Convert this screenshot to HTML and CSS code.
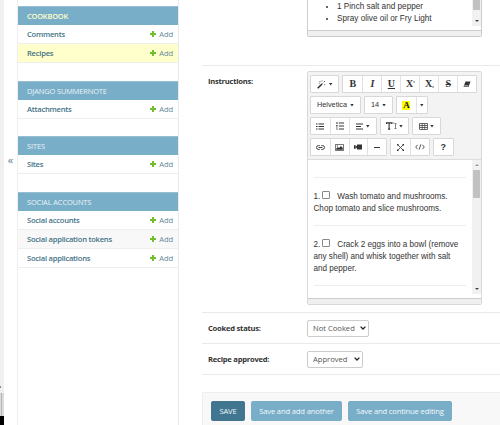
FILE: index.html
```html
<!DOCTYPE html>
<html lang="en">
<head>
<meta charset="utf-8">
<title>Change recipe</title>
<link rel="stylesheet" href="styles.css">
</head>
<body>
<div class="edge"><div class="edge-mark"></div><div class="edge-bar"></div><div class="edge-end"></div></div>
<div class="toggle">«</div>
<nav class="sidebar">
  <section class="app current">
    <h2>COOKBOOK</h2>
    <div class="model"><b>Comments</b><a><i class="plus"></i>Add</a></div>
    <div class="model selected"><b>Recipes</b><a><i class="plus"></i>Add</a></div>
  </section>
  <section class="app">
    <h2>DJANGO SUMMERNOTE</h2>
    <div class="model"><b>Attachments</b><a><i class="plus"></i>Add</a></div>
  </section>
  <section class="app">
    <h2>SITES</h2>
    <div class="model"><b>Sites</b><a><i class="plus"></i>Add</a></div>
  </section>
  <section class="app">
    <h2>SOCIAL ACCOUNTS</h2>
    <div class="model"><b>Social accounts</b><a><i class="plus"></i>Add</a></div>
    <div class="model alt"><b>Social application tokens</b><a><i class="plus"></i>Add</a></div>
    <div class="model"><b>Social applications</b><a><i class="plus"></i>Add</a></div>
  </section>
</nav>
<main>
  <div class="row ingredients">
    <div class="label"></div>
    <div class="editor first">
      <div class="pane">
        <ul class="list"><li>1 Pinch salt and pepper</li><li>Spray olive oil or Fry Light</li></ul>
        <div class="scroll"><div class="thumb"></div><div class="down"></div></div>
      </div>
      <div class="status"></div>
    </div>
  </div>
  <div class="row instructions">
    <div class="label">Instructions:</div>
    <div class="editor second">
      <div class="toolbar">
        <div class="tools">
          <div class="group"><span class="btn w28"><svg width="9" height="9" viewBox="0 0 9 9"><path d="M.7 8.3 5 4" stroke="#333" stroke-width="1.6"/><path d="M5.4 3.6 6.3 2.7M3 1v1M5 .5v1M7.5 1v1M7.7 4.2v1M2.5 2.8v.8" stroke="#555" stroke-width=".9"/></svg><i class="caret"></i></span></div>
          <div class="group seven"><span class="btn serif">B</span><span class="btn serif ital">I</span><span class="btn serif under">U</span><span class="btn serif">X<sup>s</sup></span><span class="btn serif">X<sub>s</sub></span><span class="btn serif strike">S</span><span class="btn"><svg width="8" height="7" viewBox="0 0 8 7"><path d="M2.5.5h5L5.5 6h-5z" fill="#333"/><path d="m1.5 4.2h4L5 5.6H1z" fill="#bbb"/></svg></span></div>
        </div>
        <div class="tools">
          <div class="group"><span class="btn w51">Helvetica<i class="caret"></i></span></div>
          <div class="group"><span class="btn w29">14<i class="caret"></i></span></div>
          <div class="group"><span class="btn"><span class="mark">A</span></span><span class="btn w11"><i class="caret"></i></span></div>
        </div>
        <div class="tools">
          <div class="group"><span class="btn"><svg width="8" height="7" viewBox="0 0 8 7"><path d="M0 1h1.5M0 3.5h1.5M0 6h1.5M2.5 1H8M2.5 3.5H8M2.5 6H8" stroke="#333" stroke-width="1.2"/></svg></span><span class="btn"><svg width="8" height="8" viewBox="0 0 8 8"><path d="M1 0v2M.2 3.5h1.3M.2 5h1.3M.2 7h1.3M2.8 1H8M2.8 4H8M2.8 7H8" stroke="#333"/></svg></span><span class="btn w28"><svg width="7" height="7" viewBox="0 0 7 7"><path d="M0 1h7M0 3.5h5M0 6h7" stroke="#333" stroke-width="1.1"/></svg><i class="caret"></i></span></div>
          <div class="group"><span class="btn w29"><svg width="11" height="8" viewBox="0 0 11 8"><path d="M.4 2V.9h5.4V2M3.1 1v6M2 7.1h2.2" fill="none" stroke="#333" stroke-width="1.1"/><path d="M6.2 1h2M9.5 1v6M8.5 2l1-1 1 1M8.5 6l1 1 1-1" fill="none" stroke="#666" stroke-width=".8"/></svg><i class="caret tight"></i></span></div>
          <div class="group"><span class="btn w29"><svg width="9" height="7" viewBox="0 0 9 7"><path d="M.5.5h8v6h-8zM.5 2.5h8M.5 4.5h8M3.2.5v6M5.8.5v6" fill="none" stroke="#444" stroke-width=".8"/></svg><i class="caret tight"></i></span></div>
        </div>
        <div class="tools">
          <div class="group"><span class="btn"><svg width="9" height="5" viewBox="0 0 9 5"><path d="M3.8.6H2.4a1.9 1.9 0 0 0 0 3.8h1.4M5.2.6h1.4a1.9 1.9 0 0 1 0 3.8H5.2M2.5 2.5h4" fill="none" stroke="#444"/></svg></span><span class="btn"><svg width="9" height="7" viewBox="0 0 9 7"><path d="M.4.4h8.2v6.2H.4z" fill="#fff" stroke="#444" stroke-width=".8"/><path d="M1.2 5.8V4.6L3 3l1 1 2-2 1.8 2v1.8z" fill="#333"/><circle cx="2.3" cy="1.9" r=".6" fill="#333"/></svg></span><span class="btn"><svg width="8" height="6" viewBox="0 0 8 6"><path d="M3 .5h5v5H3V4L0 5V1l3 1z" fill="#333"/><path d="M1 3h1.5" stroke="#999"/></svg></span><span class="btn"><i class="rule"></i></span></div>
          <div class="group"><span class="btn"><svg width="7" height="7" viewBox="0 0 7 7"><path d="m.8.8 5.4 5.4M6.2.8.8 6.2" stroke="#555"/><path d="M0 0h2L0 2zM7 0v2L5 0zM0 7V5l2 2zM7 7H5l2-2z" fill="#333"/></svg></span><span class="btn"><svg width="10" height="6" viewBox="0 0 10 6"><path d="M2.6.8.7 3l1.9 2.2M7.4.8 9.3 3 7.4 5.2M5.8.4 4.2 5.6" fill="none" stroke="#444" stroke-width=".9"/></svg></span></div>
          <div class="group"><span class="btn help">?</span></div>
        </div>
      </div>
      <div class="pane">
        <div class="note">
          <hr>
          <p class="step one">1.<span class="check"></span>Wash tomato and mushrooms.<br>Chop tomato and slice mushrooms.</p>
          <hr>
          <p class="step two">2.<span class="check"></span>Crack 2 eggs into a bowl (remove<br>any shell) and whisk together with salt<br>and pepper.</p>
          <hr>
        </div>
        <div class="scroll"><div class="up"></div><div class="thumb"></div><div class="down"></div></div>
      </div>
      <div class="status"></div>
    </div>
  </div>
  <div class="row choice"><div class="label">Cooked status:</div><div class="select cooked">Not Cooked<svg width="6" height="4" viewBox="0 0 6 4"><path d="m.6.6 2.4 2.4L5.4.6" fill="none" stroke="#222" stroke-width="1.3"/></svg></div></div>
  <div class="row choice"><div class="label">Recipe approved:</div><div class="select approved">Approved<svg width="6" height="4" viewBox="0 0 6 4"><path d="m.6.6 2.4 2.4L5.4.6" fill="none" stroke="#222" stroke-width="1.3"/></svg></div></div>
  <div class="submit"><span class="save">SAVE</span><span class="another">Save and add another</span><span class="continue">Save and continue editing</span></div>
</main>
</body>
</html>
```
FILE: styles.css
```css
* { box-sizing: border-box; }
body { margin: 0; width: 500px; height: 425px; overflow: hidden; display: flex; background: #fff; color: #333; font: 7.6px/10px "Open Sans", "Noto Sans", sans-serif; letter-spacing: -.15px; }
i { font-style: normal; }
svg { display: block; flex: none; }
.edge { width: 4px; height: 425px; background: #f0f0f0; display: flex; flex-direction: column; flex: none; }
.edge-mark { width: 1px; height: 2px; margin-top: 386px; background: #888; }
.edge-bar { height: 23px; margin-top: 5px; background: #b4b4b4; border-right: 2px solid #dcdcdc; border-left: 1px solid #dcdcdc; }
.edge-end { height: 9px; background: #000; }
.toggle { width: 13px; flex: none; padding-top: 153px; text-align: center; font-size: 11px; line-height: 13px; color: #58829a; }
.sidebar { width: 162px; flex: none; border-left: 1px solid #eee; border-right: 1px solid #eaeaea; padding-top: 6px; display: grid; grid-template-rows: 75px 55px 56px 1fr; }
h2 { margin: 0; height: 19px; padding-left: 9px; background: #79aec8; border-top: 1px solid #96bfd3; color: #e9f3f8; font-size: 7.4px; line-height: 19px; font-weight: 400; letter-spacing: -.1px; }
.current h2 { color: #ffc; font-weight: 600; letter-spacing: -.15px; }
.model { height: 19px; padding: 0 5px 0 9px; display: flex; justify-content: space-between; align-items: center; border-bottom: 1px solid #eee; color: #447e9b; }
.model b { font-weight: 600; color: #447287; letter-spacing: -.24px; }
.model a { display: flex; align-items: center; gap: 3px; color: #63889d; }
.selected { background: #ffc; }
.alt { background: #f8f8f8; }
.plus { width: 6px; height: 6px; margin-top: -1px; background: linear-gradient(#70bf2b,#70bf2b) center/2px 6px no-repeat, linear-gradient(#70bf2b,#70bf2b) center/6px 2px no-repeat; }
main { flex: 1; min-width: 0; padding-left: 23px; }
.row { display: flex; border-bottom: 1px solid #eaeaea; }
.label { width: 105px; padding-left: 6px; flex: none; font-weight: 700; color: #333; letter-spacing: -.24px; }
.ingredients { height: 66px; }
.instructions { height: 247px; padding-top: 5px; }
.instructions .label { padding-top: 5px; }
.editor { width: 175px; display: flex; flex-direction: column; border: 1px solid #ccc; border-radius: 2px; font-family: "Liberation Sans", sans-serif; letter-spacing: 0; overflow: hidden; background: #fff; }
.first { height: 37px; border-top: 0; border-top-left-radius: 0; border-top-right-radius: 0; }
.second { height: 234px; border-color: #d8d8d8; }
.pane { flex: 1; min-height: 0; display: flex; justify-content: space-between; padding-bottom: 4px; }
.status { height: 6px; flex: none; background: #f0f0f0; border-top: 1px solid #ccc; }
.list { margin: 0; padding: .6px 0 0 29px; font-size: 8.2px; line-height: 12px; }
.list li::marker { font-size: 8px; }
.scroll { width: 9px; background: #f1f1f1; display: flex; flex-direction: column; align-items: center; flex: none; }
.thumb { width: 7px; height: 10px; background: #c1c1c1; }
.down { margin-top: auto; margin-bottom: 4px; border: 2px solid transparent; border-top-color: #444; border-bottom: 0; }
.up { margin: 4px 0; border: 2px solid transparent; border-bottom-color: #999; border-top: 0; }
.second .thumb { height: 28px; }
.toolbar { height: 88px; flex: none; padding: 3px 0 0 2px; background: #f3f3f3; border-bottom: 1px solid #ddd; display: flex; flex-direction: column; gap: 3px; }
.tools { display: flex; gap: 3px; height: 18px; }
.group { display: flex; border: 1px solid #d8d8d8; border-radius: 1px; background: #fff; }
.btn { width: 18.8px; display: flex; align-items: center; justify-content: center; font-size: 7.3px; line-height: 16px; white-space: nowrap; }
.btn + .btn { border-left: 1px solid #e2e2e2; }
.seven .btn { width: 19px; }
.btn.w28 { width: 27.4px; }
.btn.w29 { width: 27px; }
.btn.w51 { width: 49px; }
.btn.w11 { width: 11px; }
.caret { margin-left: 3px; width: 4px; height: 3px; background: #333; clip-path: polygon(0 0, 100% 0, 50% 100%); }
.tight { margin-left: 2px; }
.w11 .caret { margin-left: 0; }
.serif { font: bold 10px/16px "Liberation Serif", serif; }
.ital { font-style: italic; }
.under { text-decoration: underline; }
.strike { text-decoration: line-through; }
sup, sub { font-size: 4px; line-height: 4px; align-self: flex-start; margin-top: 4px; }
sub { align-self: flex-end; margin: 0 0 3px; }
.mark { background: #ff0; width: 8px; text-align: center; font: bold 9px/9px "Liberation Serif", serif; color: #111; }
.rule { width: 6px; height: 1px; background: #333; }
.help { font-size: 9px; font-weight: 700; }
.note { width: 158px; padding: 17px 0 0 5px; font-size: 8.15px; line-height: 12px; white-space: nowrap; }
.note hr { margin: 0 0 0 1px; width: 152px; border: 0; border-top: 1px solid #eee; }
.step { margin: 0; padding: 13.4px 0 0 .5px; }
.one { height: 47px; }
.two { height: 59px; }
.check { display: inline-block; width: 8px; height: 8px; margin: 0 7px 0 2px; border: 1px solid #888; border-radius: 1px; vertical-align: 0; }
.choice { height: 31px; align-items: center; }
.select { height: 17px; display: flex; align-items: center; justify-content: space-between; padding: 0 2px 0 5px; border: 1px solid #ccc; border-radius: 2px; color: #555; letter-spacing: 0; }
.cooked { width: 62px; }
.approved { width: 56px; }
.submit { margin-top: 17px; height: 40px; padding: 8px; display: flex; gap: 6px; background: #f8f8f8; border: 1px solid #eee; border-right: 0; border-radius: 2px 0 0 0; color: #f4f9fc; white-space: nowrap; }
.submit span { height: 20px; line-height: 20px; border-radius: 2px; text-align: center; background: #79aec8; }
.submit .save { width: 34px; background: #417690; }
.submit .another { width: 91px; }
.submit .continue { width: 104px; }
```
